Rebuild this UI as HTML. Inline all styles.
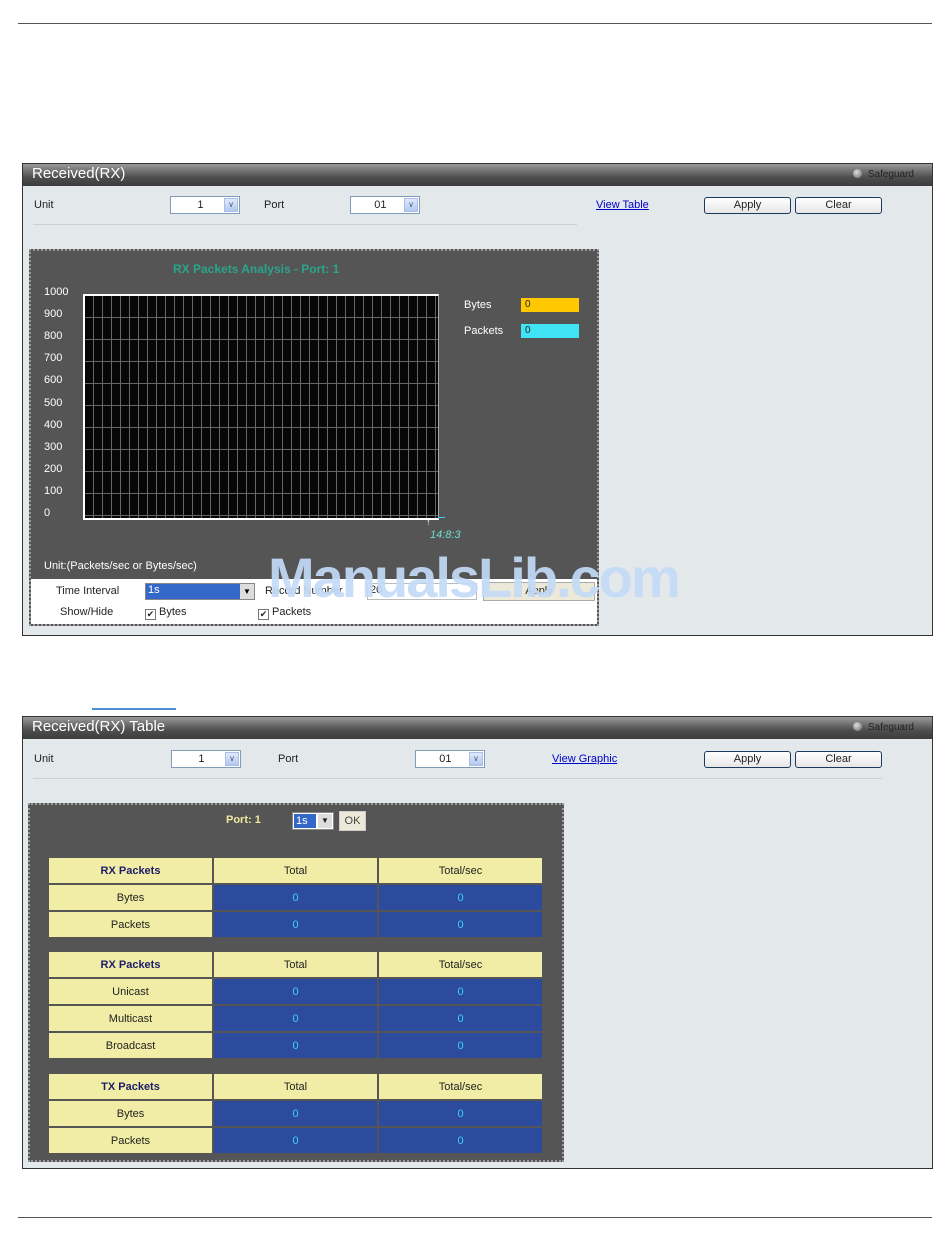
<!DOCTYPE html>
<html><head><meta charset="utf-8"><style>
*{box-sizing:border-box;margin:0;padding:0}
body{width:950px;height:1260px;background:#fff;position:relative;font-family:"Liberation Sans",sans-serif;font-size:11px;color:#222;overflow:hidden}
.a{position:absolute}
.hr{position:absolute;height:1px;background:#555}
.panel{position:absolute;background:#e3e8eb;border:1px solid #333}
.tb{position:absolute;left:0;right:0;top:0;height:22px;background:linear-gradient(#9a9a9a,#4e4e4e 60%,#3c3c3c);color:#fff;font-size:15px;padding:1px 9px}
.sg{position:absolute;right:18px;top:5px;font-size:10px;color:#222}
.sg:before{content:"";display:inline-block;width:9px;height:9px;border-radius:50%;background:radial-gradient(circle at 40% 35%,#ddd,#666);margin-right:6px;vertical-align:-1px}
.sel{position:absolute;background:#fff;border:1px solid #7f9db9;height:18px;font-size:11px;text-align:center;line-height:16px}
.sel i{position:absolute;right:1px;top:1px;width:14px;height:14px;background:linear-gradient(#dfe9fb,#b4c8f0);border:1px solid #a9bde6;font-style:normal;font-size:8px;line-height:12px;color:#4d6185}
.btn{position:absolute;height:17px;border:1px solid #1c3a5e;border-radius:3px;background:linear-gradient(#fff,#e6e6e6);text-align:center;font-size:11px;line-height:15px}
.lnk{position:absolute;color:#00c;text-decoration:underline;font-size:11px}
.sep{position:absolute;height:1px;background:#c5d2d8}
.dot{position:absolute;border:2px dotted #999;background:#555}
.yl{position:absolute;left:44px;color:#fff;font-size:11px}
.cb{display:inline-block;width:11px;height:11px;border:1px solid #777;background:#fff;font-size:9px;line-height:9px;text-align:center;vertical-align:-2px;margin-right:3px}
table{position:absolute;border-collapse:separate;border-spacing:2px;font-size:11px}
td{height:25px;text-align:center;width:163px}
td.h{background:#f1eda6;color:#222}
td.h b{color:#1c1c6a}
td.v{background:#2d4b9c;color:#3dd0ff}
</style></head><body>
<div class="hr" style="left:18px;top:23px;width:914px"></div>
<div class="hr" style="left:18px;top:1217px;width:914px"></div>

<div class="panel" style="left:22px;top:163px;width:911px;height:473px">
 <div class="tb">Received(RX)<span class="sg">Safeguard</span></div>
</div>
<div class="a" style="left:34px;top:199px">Unit</div>
<div class="sel" style="left:170px;top:196px;width:70px">1&nbsp;&nbsp;&nbsp;<i>&#8744;</i></div>
<div class="a" style="left:264px;top:199px">Port</div>
<div class="sel" style="left:350px;top:196px;width:70px">01&nbsp;&nbsp;&nbsp;<i>&#8744;</i></div>
<div class="sep" style="left:33px;top:224px;width:544px"></div>
<div class="lnk" style="left:596px;top:199px">View Table</div>
<div class="btn" style="left:704px;top:197px;width:87px">Apply</div>
<div class="btn" style="left:795px;top:197px;width:87px">Clear</div>

<div class="dot" style="left:29px;top:249px;width:570px;height:377px"></div>
<div class="a" style="left:173px;top:262px;color:#2aa58a;font-size:12px;font-weight:bold">RX Packets Analysis - Port: 1</div>
<div class="a" style="left:83px;top:294px;width:356px;height:226px;background-color:#060606;border-left:2px solid #fff;border-top:2px solid #fff;border-bottom:2px solid #fff;border-right:1px solid #aaa;background-image:repeating-linear-gradient(90deg,transparent 0 8px,#666 8px 9px),repeating-linear-gradient(180deg,transparent 0 21px,#666 21px 22px)"></div>
<div class="yl" style="top:286px">1000</div><div class="yl" style="top:308px">900</div><div class="yl" style="top:330px">800</div><div class="yl" style="top:352px">700</div><div class="yl" style="top:374px">600</div><div class="yl" style="top:397px">500</div><div class="yl" style="top:419px">400</div><div class="yl" style="top:441px">300</div><div class="yl" style="top:463px">200</div><div class="yl" style="top:485px">100</div><div class="yl" style="top:507px">0</div>
<div class="a" style="left:464px;top:299px;color:#fff">Bytes</div>
<div class="a" style="left:521px;top:298px;width:58px;height:14px;background:#ffc800;padding-left:4px;font-size:10px;line-height:14px">0</div>
<div class="a" style="left:464px;top:325px;color:#fff">Packets</div>
<div class="a" style="left:521px;top:324px;width:58px;height:14px;background:#40e4f4;padding-left:4px;font-size:10px;line-height:14px">0</div>
<div class="a" style="left:438px;top:517px;width:7px;height:1px;background:#3cf"></div>
<div class="a" style="left:426px;top:517px;color:#fff;font-size:9px">&#8593;</div>
<div class="a" style="left:430px;top:529px;color:#6ee0d0;font-size:11px;font-style:italic">14:8:3</div>
<div class="a" style="left:44px;top:560px;color:#fff">Unit:(Packets/sec or Bytes/sec)</div>
<div class="a" style="left:31px;top:579px;width:566px;height:45px;background:#fff"></div>
<div class="a" style="left:56px;top:585px">Time Interval</div>
<div class="a" style="left:145px;top:583px;width:110px;height:17px;border:1px solid #888;background:#3468c8;color:#fff;padding-left:2px">1s<span style="position:absolute;right:0;top:0;width:14px;height:15px;background:#ddd;color:#000;font-size:8px;text-align:center;line-height:15px">&#9660;</span></div>
<div class="a" style="left:265px;top:585px">Record Number</div>
<div class="a" style="left:367px;top:583px;width:110px;height:17px;border:1px solid #bbb;background:#fff;padding-left:2px">20</div>
<div class="a" style="left:483px;top:582px;width:112px;height:19px;border:1px solid #aaa;background:#ece9d8;text-align:center;line-height:17px">Apply</div>
<div class="a" style="left:60px;top:606px">Show/Hide</div>
<div class="a" style="left:145px;top:606px"><span class="cb">&#10004;</span>Bytes</div>
<div class="a" style="left:258px;top:606px"><span class="cb">&#10004;</span>Packets</div>
<div class="a" style="left:268px;top:545px;font-size:56px;font-weight:bold;color:rgba(195,218,246,0.92);letter-spacing:-2px">ManualsLib.com</div>

<div class="a" style="left:92px;top:708px;width:84px;height:2px;background:#4a90d0"></div>

<div class="panel" style="left:22px;top:716px;width:911px;height:453px">
 <div class="tb">Received(RX) Table<span class="sg">Safeguard</span></div>
</div>
<div class="a" style="left:34px;top:753px">Unit</div>
<div class="sel" style="left:171px;top:750px;width:70px">1&nbsp;&nbsp;&nbsp;<i>&#8744;</i></div>
<div class="a" style="left:278px;top:753px">Port</div>
<div class="sel" style="left:415px;top:750px;width:70px">01&nbsp;&nbsp;&nbsp;<i>&#8744;</i></div>
<div class="lnk" style="left:552px;top:753px">View Graphic</div>
<div class="btn" style="left:704px;top:751px;width:87px">Apply</div>
<div class="btn" style="left:795px;top:751px;width:87px">Clear</div>
<div class="sep" style="left:33px;top:778px;width:849px"></div>

<div class="dot" style="left:28px;top:803px;width:536px;height:359px"></div>
<div class="a" style="left:226px;top:814px;color:#f0e8a0;font-weight:bold">Port: 1</div>
<div class="a" style="left:292px;top:812px;width:42px;height:18px;border:1px solid #888;background:#fff"><span style="position:absolute;left:1px;top:1px;width:22px;height:14px;background:#3468c8;color:#fff;padding-left:2px;line-height:14px">1s</span><span style="position:absolute;right:1px;top:1px;width:14px;height:14px;background:#ddd;font-size:8px;text-align:center;line-height:14px">&#9660;</span></div>
<div class="a" style="left:339px;top:811px;width:27px;height:20px;background:#ece9d8;border:1px solid #ccc;text-align:center;line-height:18px;color:#444">OK</div>

<table style="left:47px;top:856px"><tr><td class="h"><b>RX Packets</b></td><td class="h">Total</td><td class="h">Total/sec</td></tr><tr><td class="h">Bytes</td><td class="v">0</td><td class="v">0</td></tr><tr><td class="h">Packets</td><td class="v">0</td><td class="v">0</td></tr></table>
<table style="left:47px;top:950px"><tr><td class="h"><b>RX Packets</b></td><td class="h">Total</td><td class="h">Total/sec</td></tr><tr><td class="h">Unicast</td><td class="v">0</td><td class="v">0</td></tr><tr><td class="h">Multicast</td><td class="v">0</td><td class="v">0</td></tr><tr><td class="h">Broadcast</td><td class="v">0</td><td class="v">0</td></tr></table>
<table style="left:47px;top:1072px"><tr><td class="h"><b>TX Packets</b></td><td class="h">Total</td><td class="h">Total/sec</td></tr><tr><td class="h">Bytes</td><td class="v">0</td><td class="v">0</td></tr><tr><td class="h">Packets</td><td class="v">0</td><td class="v">0</td></tr></table>
</body></html>
